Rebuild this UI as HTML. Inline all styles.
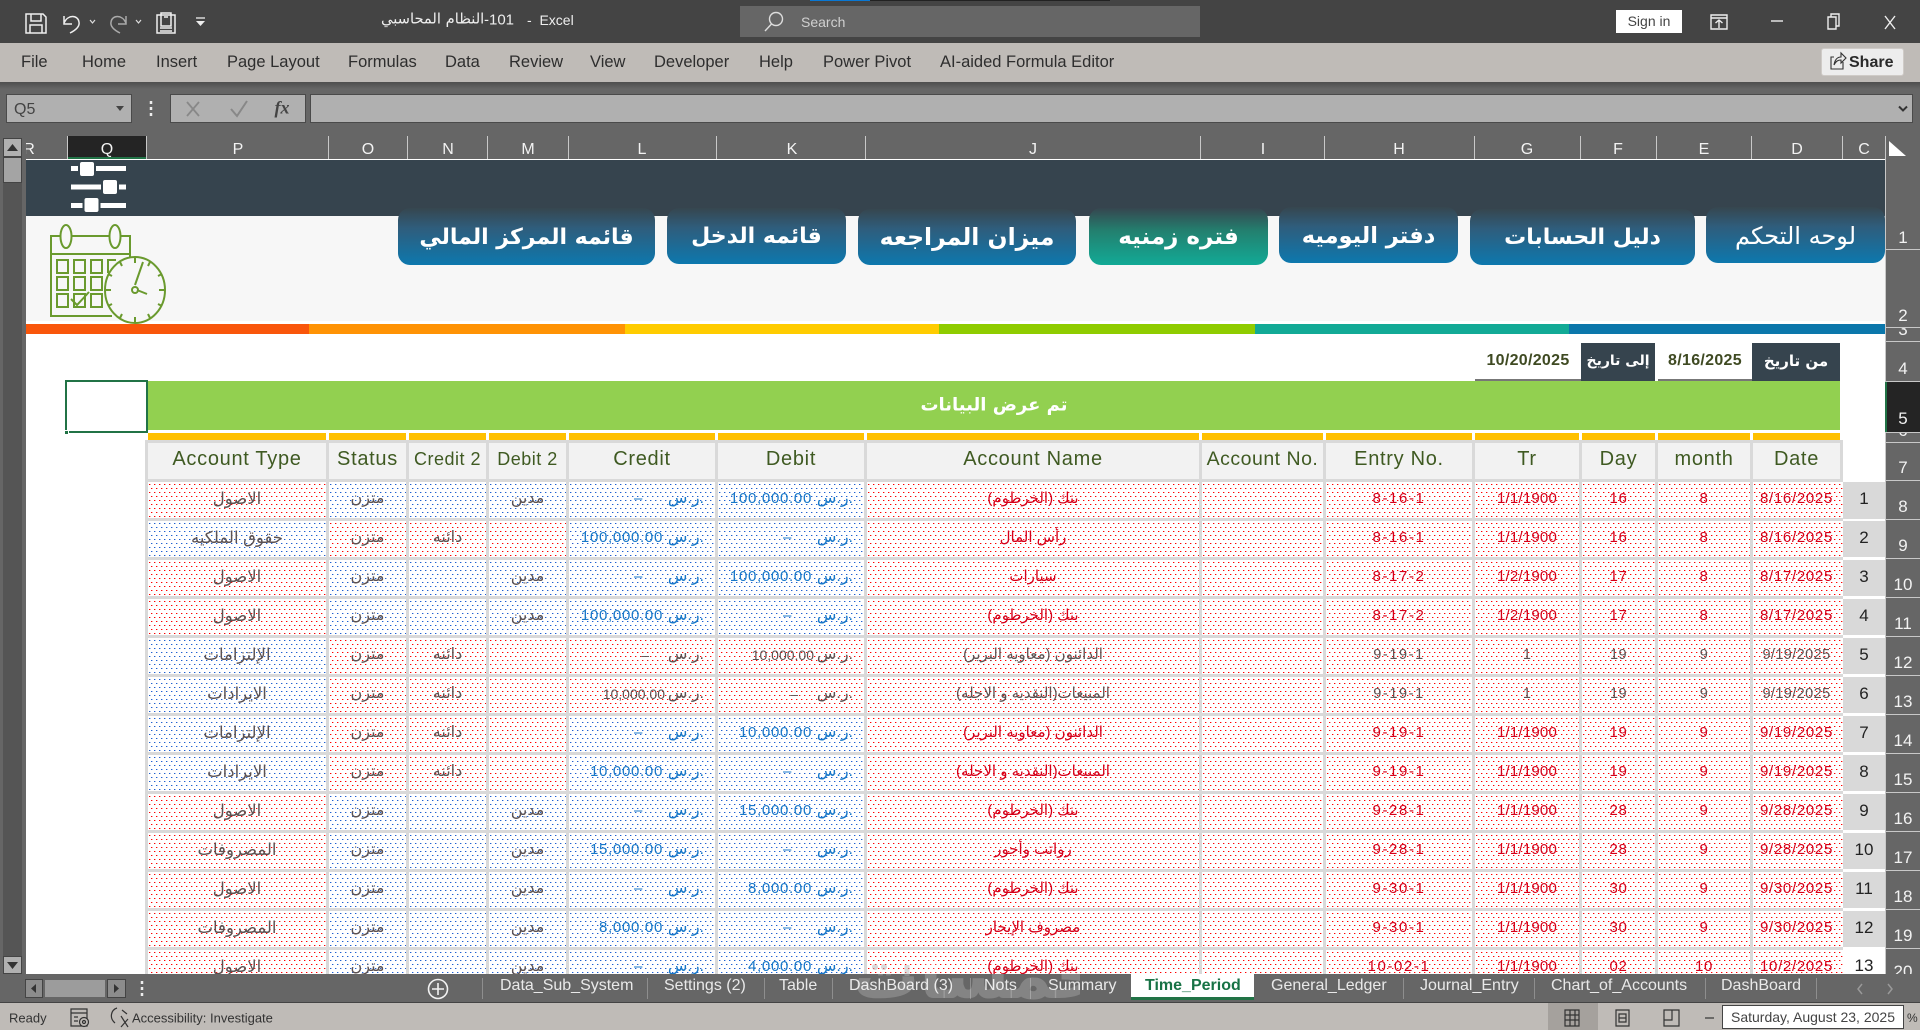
<!DOCTYPE html>
<html lang="en"><head><meta charset="utf-8"><title>Excel</title>
<style>
*{box-sizing:border-box}
html,body{margin:0;padding:0;width:1920px;height:1030px;overflow:hidden;background:#666;font-family:"Liberation Sans","DejaVu Sans",sans-serif}
.a{position:absolute;white-space:nowrap}
.t{position:absolute;white-space:nowrap;line-height:1;transform:translateY(-50%)}
.c{position:absolute;white-space:nowrap;line-height:1;transform:translate(-50%,-50%)}
.rib{font-size:16.5px;color:#2e2e2e;top:62px}
.col{font-size:16px;color:#f2f2f2;top:150px}
.sep{position:absolute;top:136px;height:23px;width:1px;background:#c8c8c8}
.rh{position:absolute;left:1886px;width:34px;text-align:center;color:#f2f2f2;font-size:17px;line-height:1}
.rl{position:absolute;left:1885px;width:35px;height:1px;background:#c8c8c8}
.btn{position:absolute;display:flex;align-items:center;justify-content:center;border-radius:12px;color:#fff;background:linear-gradient(#36464f,#2f5d7c 35%,#0d78ae);font-family:"DejaVu Sans",sans-serif;white-space:nowrap;font-weight:bold;direction:rtl}
.gold{position:absolute;top:433px;height:7px;background:#ffc000}
.g{position:absolute;left:145px;top:440px;width:1698px;height:534px;overflow:hidden;background:#d9d9d9;padding:3px 3px 0;display:grid;grid-template-columns:178px 77px 77px 77px 146px 146px 332px 121px 146px 104px 73px 92px 87px;grid-auto-rows:36px;gap:3px}
.g>div{position:relative;text-align:center;line-height:34px;font-size:15px;color:#5c5252;white-space:nowrap;overflow:hidden}
.g>div:nth-child(n+14):nth-child(13n){margin-right:-3px;padding-right:3px}
.g>div:not(.h):nth-child(13n+1){font-size:16.5px}
.g>div:not(.h):nth-child(13n+2),.g>div:not(.h):nth-child(13n+3),.g>div:not(.h):nth-child(13n+4){font-size:16px}
.g>.h{background:#f2f2f2;color:#3f5a22;font-size:20px;line-height:32px;letter-spacing:.7px}
.g>.h.s{font-size:18px;letter-spacing:.5px}
.g>.h.m{font-size:19.5px;letter-spacing:.5px}
.g>.r,.g>.b{background-color:#fff}
.r{background-image:conic-gradient(from 270deg at 1px 1px,#f00 25%,#0000 0),conic-gradient(from 270deg at 1px 1px,#f00 25%,#0000 0),conic-gradient(from 270deg at 2px 1px,#ffa6a6 25%,#0000 0),conic-gradient(from 270deg at 2px 1px,#ffa6a6 25%,#0000 0);background-size:5px 8px;background-position:1px 2px,3px 6px,1px 2px,3px 6px}
.b{background-image:conic-gradient(from 270deg at 1px 1px,#1f5fd0 25%,#0000 0),conic-gradient(from 270deg at 1px 1px,#1f5fd0 25%,#0000 0),conic-gradient(from 270deg at 2px 1px,#abc4ee 25%,#0000 0),conic-gradient(from 270deg at 2px 1px,#abc4ee 25%,#0000 0);background-size:5px 8px;background-position:1px 2px,3px 6px,1px 2px,3px 6px}
.g>.rd{color:#d4001a}
.g>.bl{color:#1878c8}
.g>.n{font-size:15px;letter-spacing:.7px}
.g>.n:nth-child(13n+9){letter-spacing:1.6px}
.g>.n:nth-child(13n+10){letter-spacing:.2px}
.g>.k{font-size:14.5px;letter-spacing:.4px}
.g i{position:absolute;right:52px;top:0;font-style:normal;letter-spacing:.7px;font-size:15px}
.g i.d{right:72px}
.g i.q{font-size:14px;letter-spacing:0;right:50px}
.g i.q.d{right:66px}
.g u{position:absolute;right:11px;top:0;text-decoration:none;font-size:16px}
.ix{position:absolute;left:1843px;width:42px;background:#d9d9d9;text-align:center;font-size:17px;color:#222;line-height:34px}
.tab{position:absolute;top:986px;font-size:16px;color:#e9e9e9;line-height:1;transform:translateY(-50%);white-space:nowrap}
.ts{position:absolute;top:978px;height:21px;width:1px;background:#8e8e8e}
</style></head><body>

<!-- title bar -->
<div class="a" style="left:0;top:0;width:1920px;height:43px;background:#444"></div>
<div class="a" style="left:810px;top:0;width:60px;height:1px;background:#0a78d4"></div>
<div class="a" style="left:870px;top:0;width:240px;height:1px;background:#222"></div>
<div class="a" style="left:740px;top:6px;width:460px;height:31px;background:#666"></div>
<div class="t" style="left:801px;top:22px;font-size:14px;color:#d0d0d0">Search</div>
<div class="t" style="left:381px;top:20px;font-size:14.700px;color:#eee;font-family:'DejaVu Sans',sans-serif;direction:rtl">النظام المحاسبي</div>
<div class="t" style="left:484px;top:20px;font-size:15px;color:#eee">-101</div>
<div class="t" style="left:527px;top:20px;font-size:14px;color:#eee">-&nbsp; Excel</div>
<div class="a" style="left:1616px;top:10px;width:66px;height:23px;background:#fff;color:#444;font-size:14px;line-height:23px;text-align:center">Sign in</div>

<!-- ribbon -->
<div class="a" style="left:0;top:43px;width:1920px;height:39px;background:#bfbbb7"></div>
<div class="t rib" style="left:21px">File</div>
<div class="t rib" style="left:82px">Home</div>
<div class="t rib" style="left:156px">Insert</div>
<div class="t rib" style="left:227px">Page Layout</div>
<div class="t rib" style="left:348px">Formulas</div>
<div class="t rib" style="left:445px">Data</div>
<div class="t rib" style="left:509px">Review</div>
<div class="t rib" style="left:590px">View</div>
<div class="t rib" style="left:654px">Developer</div>
<div class="t rib" style="left:759px">Help</div>
<div class="t rib" style="left:823px">Power Pivot</div>
<div class="t rib" style="left:940px">AI-aided Formula Editor</div>
<div class="a" style="left:1821px;top:48px;width:83px;height:28px;background:#ededed;border:1px solid #cfcbc7;border-radius:3px;color:#2a2a2a;font-size:16px;font-weight:bold;line-height:27px;padding-left:27px">Share</div>

<!-- formula bar -->
<div class="a" style="left:0;top:82px;width:1920px;height:54px;background:linear-gradient(#4e4e4e,#666 7px)"></div>
<div class="a" style="left:6px;top:94px;width:126px;height:29px;background:#b0b0b0;border:1px solid #4a4a4a;color:#444;font-size:16px;line-height:29px;padding-left:7px">Q5</div>
<div class="a" style="left:170px;top:94px;width:136px;height:29px;background:#b0b0b0;border:1px solid #4a4a4a"></div>
<div class="a" style="left:310px;top:94px;width:1603px;height:29px;background:#b0b0b0;border:1px solid #4a4a4a"></div>
<div class="c" style="left:282px;top:108px;font:italic bold 18px 'Liberation Serif',serif;color:#444">fx</div>

<!-- column headers -->
<div class="a" style="left:67px;top:136px;width:79px;height:23px;background:#242424"></div>
<div class="a" style="left:26px;top:159px;width:1859px;height:1px;background:#c8c8c8"></div>
<div class="a" style="left:67px;top:157px;width:79px;height:3px;background:#217346"></div>
<div class="sep" style="left:67px"></div><div class="sep" style="left:146px"></div><div class="sep" style="left:328px"></div><div class="sep" style="left:407px"></div><div class="sep" style="left:487px"></div><div class="sep" style="left:568px"></div><div class="sep" style="left:716px"></div><div class="sep" style="left:865px"></div><div class="sep" style="left:1200px"></div><div class="sep" style="left:1324px"></div><div class="sep" style="left:1474px"></div><div class="sep" style="left:1580px"></div><div class="sep" style="left:1656px"></div><div class="sep" style="left:1751px"></div><div class="sep" style="left:1842px"></div><div class="sep" style="left:1885px"></div>
<div class="c col" style="left:29px">R</div><div class="c col" style="left:107px">Q</div><div class="c col" style="left:238px">P</div><div class="c col" style="left:368px">O</div><div class="c col" style="left:448px">N</div><div class="c col" style="left:528px">M</div><div class="c col" style="left:642px">L</div><div class="c col" style="left:792px">K</div><div class="c col" style="left:1033px">J</div><div class="c col" style="left:1263px">I</div><div class="c col" style="left:1399px">H</div><div class="c col" style="left:1527px">G</div><div class="c col" style="left:1618px">F</div><div class="c col" style="left:1704px">E</div><div class="c col" style="left:1797px">D</div><div class="c col" style="left:1864px">C</div>

<!-- left scroll strip -->
<div class="a" style="left:0;top:136px;width:26px;height:838px;background:#666"></div>
<div class="a" style="left:3px;top:138px;width:19px;height:836px;background:#555"></div>
<div class="a" style="left:3px;top:138px;width:19px;height:19px;background:#b0b0b0;border:1px solid #444"></div>
<div class="a" style="left:3px;top:157px;width:19px;height:26px;background:#a4a4a4;border:1px solid #444"></div>
<div class="a" style="left:3px;top:956px;width:19px;height:18px;background:#b0b0b0;border:1px solid #444"></div>

<!-- sheet -->
<div class="a" style="left:26px;top:159px;width:1859px;height:815px;background:#fff"></div>
<div class="a" style="left:26px;top:160px;width:1859px;height:56px;background:#36444e"></div>
<div class="a" style="left:26px;top:216px;width:1859px;height:105px;background:#f7f7f7"></div>
<div class="a" style="left:26px;top:324px;width:283px;height:10px;background:#f9560b"></div>
<div class="a" style="left:309px;top:324px;width:316px;height:10px;background:#ff9305"></div>
<div class="a" style="left:625px;top:324px;width:314px;height:10px;background:#ffcc00"></div>
<div class="a" style="left:939px;top:324px;width:316px;height:10px;background:#8fcc00"></div>
<div class="a" style="left:1255px;top:324px;width:314px;height:10px;background:#12aa96"></div>
<div class="a" style="left:1569px;top:324px;width:316px;height:10px;background:#0b77ab"></div>

<!-- nav buttons -->
<div class="btn" style="left:398px;top:208px;width:257px;height:57px;font-size:22px;padding-top:2px">قائمه المركز المالي</div>
<div class="btn" style="left:667px;top:208px;width:179px;height:56px;font-size:22px;padding-top:1px">قائمه الدخل</div>
<div class="btn" style="left:858px;top:209px;width:218px;height:56px;font-size:23.500px">ميزان المراجعه</div>
<div class="btn" style="left:1089px;top:208px;width:179px;height:57px;font-size:23px;background:linear-gradient(#36464f,#23806f 40%,#12aa96)">فتره زمنيه</div>
<div class="btn" style="left:1279px;top:207px;width:179px;height:56px;font-size:22.500px;padding-top:1px">دفتر اليوميه</div>
<div class="btn" style="left:1470px;top:209px;width:225px;height:56px;font-size:22px">دليل الحسابات</div>
<div class="btn" style="left:1706px;top:207px;width:179px;height:56px;font-size:24px;font-weight:normal;padding-top:2px">لوحه التحكم</div>

<!-- date filter -->
<div class="a" style="left:1752px;top:343px;width:88px;height:38px;background:#36444e;color:#fff;text-align:center;font:bold 15px/36px 'DejaVu Sans',sans-serif;direction:rtl">من تاريخ</div>
<div class="a" style="left:1581px;top:343px;width:74px;height:38px;background:#36444e;color:#fff;text-align:center;font:bold 14px/36px 'DejaVu Sans',sans-serif;direction:rtl">إلى تاريخ</div>
<div class="a" style="left:1658px;top:343px;width:94px;height:39px;border-bottom:3px solid #777;color:#3f4a22;text-align:center;font-size:16px;font-weight:bold;line-height:35px;letter-spacing:.3px">8/16/2025</div>
<div class="a" style="left:1475px;top:343px;width:106px;height:39px;border-bottom:3px solid #777;color:#3f4a22;text-align:center;font-size:16px;font-weight:bold;line-height:35px;letter-spacing:.3px">10/20/2025</div>

<!-- green status bar -->
<div class="a" style="left:148px;top:381px;width:1692px;height:49px;background:#92d050"></div>
<div class="c" style="left:994px;top:405px;font:bold 18px 'DejaVu Sans',sans-serif;color:#fff;direction:rtl">تم عرض البيانات</div>

<!-- gold strips -->
<div class="gold" style="left:148px;width:178px"></div><div class="gold" style="left:329px;width:77px"></div><div class="gold" style="left:409px;width:77px"></div><div class="gold" style="left:489px;width:77px"></div><div class="gold" style="left:569px;width:146px"></div><div class="gold" style="left:718px;width:146px"></div><div class="gold" style="left:867px;width:332px"></div><div class="gold" style="left:1202px;width:121px"></div><div class="gold" style="left:1326px;width:146px"></div><div class="gold" style="left:1475px;width:104px"></div><div class="gold" style="left:1582px;width:73px"></div><div class="gold" style="left:1658px;width:92px"></div><div class="gold" style="left:1753px;width:87px"></div>

<!-- table -->
<div class="g">
<div class="h">Account Type</div><div class="h">Status</div><div class="h s">Credit 2</div><div class="h s">Debit 2</div><div class="h">Credit</div><div class="h">Debit</div><div class="h">Account Name</div><div class="h m">Account No.</div><div class="h">Entry No.</div><div class="h">Tr</div><div class="h">Day</div><div class="h">month</div><div class="h">Date</div>

<div class="r">الاصول</div><div class="b">متزن</div><div class="b"></div><div class="b">مدين</div><div class="b bl"><i class="d">–</i><u>ر.س.</u></div><div class="b bl"><i>100,000.00</i><u>ر.س.</u></div><div class="r rd">بنك (الخرطوم)</div><div class="r"></div><div class="r rd n">8-16-1</div><div class="r rd n">1/1/1900</div><div class="r rd n">16</div><div class="r rd n">8</div><div class="r rd n">8/16/2025</div>

<div class="b">حقوق الملكيه</div><div class="r">متزن</div><div class="r">دائنه</div><div class="r"></div><div class="b bl"><i>100,000.00</i><u>ر.س.</u></div><div class="b bl"><i class="d">–</i><u>ر.س.</u></div><div class="r rd">رأس المال</div><div class="r"></div><div class="r rd n">8-16-1</div><div class="r rd n">1/1/1900</div><div class="r rd n">16</div><div class="r rd n">8</div><div class="r rd n">8/16/2025</div>

<div class="r">الاصول</div><div class="b">متزن</div><div class="b"></div><div class="b">مدين</div><div class="b bl"><i class="d">–</i><u>ر.س.</u></div><div class="b bl"><i>100,000.00</i><u>ر.س.</u></div><div class="r rd">سيارات</div><div class="r"></div><div class="r rd n">8-17-2</div><div class="r rd n">1/2/1900</div><div class="r rd n">17</div><div class="r rd n">8</div><div class="r rd n">8/17/2025</div>

<div class="r">الاصول</div><div class="b">متزن</div><div class="b"></div><div class="b">مدين</div><div class="b bl"><i>100,000.00</i><u>ر.س.</u></div><div class="b bl"><i class="d">–</i><u>ر.س.</u></div><div class="r rd">بنك (الخرطوم)</div><div class="r"></div><div class="r rd n">8-17-2</div><div class="r rd n">1/2/1900</div><div class="r rd n">17</div><div class="r rd n">8</div><div class="r rd n">8/17/2025</div>

<div class="b">الإلتزامات</div><div class="r">متزن</div><div class="r">دائنه</div><div class="r"></div><div class="r"><i class="q d">–</i><u>ر.س.</u></div><div class="r"><i class="q">10,000.00</i><u>ر.س.</u></div><div class="r">الدائنون (معاويه البرير)</div><div class="r"></div><div class="r n k">9-19-1</div><div class="r n k">1</div><div class="r n k">19</div><div class="r n k">9</div><div class="r n k">9/19/2025</div>

<div class="b">الايرادات</div><div class="r">متزن</div><div class="r">دائنه</div><div class="r"></div><div class="r"><i class="q">10,000.00</i><u>ر.س.</u></div><div class="r"><i class="q d">–</i><u>ر.س.</u></div><div class="r">المبيعات(النقديه و الاجله)</div><div class="r"></div><div class="r n k">9-19-1</div><div class="r n k">1</div><div class="r n k">19</div><div class="r n k">9</div><div class="r n k">9/19/2025</div>

<div class="b">الإلتزامات</div><div class="r">متزن</div><div class="r">دائنه</div><div class="r"></div><div class="b bl"><i class="d">–</i><u>ر.س.</u></div><div class="b bl"><i>10,000.00</i><u>ر.س.</u></div><div class="r rd">الدائنون (معاويه البرير)</div><div class="r"></div><div class="r rd n">9-19-1</div><div class="r rd n">1/1/1900</div><div class="r rd n">19</div><div class="r rd n">9</div><div class="r rd n">9/19/2025</div>

<div class="b">الايرادات</div><div class="r">متزن</div><div class="r">دائنه</div><div class="r"></div><div class="b bl"><i>10,000.00</i><u>ر.س.</u></div><div class="b bl"><i class="d">–</i><u>ر.س.</u></div><div class="r rd">المبيعات(النقديه و الاجله)</div><div class="r"></div><div class="r rd n">9-19-1</div><div class="r rd n">1/1/1900</div><div class="r rd n">19</div><div class="r rd n">9</div><div class="r rd n">9/19/2025</div>

<div class="r">الاصول</div><div class="b">متزن</div><div class="b"></div><div class="b">مدين</div><div class="b bl"><i class="d">–</i><u>ر.س.</u></div><div class="b bl"><i>15,000.00</i><u>ر.س.</u></div><div class="r rd">بنك (الخرطوم)</div><div class="r"></div><div class="r rd n">9-28-1</div><div class="r rd n">1/1/1900</div><div class="r rd n">28</div><div class="r rd n">9</div><div class="r rd n">9/28/2025</div>

<div class="r">المصروفات</div><div class="b">متزن</div><div class="b"></div><div class="b">مدين</div><div class="b bl"><i>15,000.00</i><u>ر.س.</u></div><div class="b bl"><i class="d">–</i><u>ر.س.</u></div><div class="r rd">رواتب وأجور</div><div class="r"></div><div class="r rd n">9-28-1</div><div class="r rd n">1/1/1900</div><div class="r rd n">28</div><div class="r rd n">9</div><div class="r rd n">9/28/2025</div>

<div class="r">الاصول</div><div class="b">متزن</div><div class="b"></div><div class="b">مدين</div><div class="b bl"><i class="d">–</i><u>ر.س.</u></div><div class="b bl"><i>8,000.00</i><u>ر.س.</u></div><div class="r rd">بنك (الخرطوم)</div><div class="r"></div><div class="r rd n">9-30-1</div><div class="r rd n">1/1/1900</div><div class="r rd n">30</div><div class="r rd n">9</div><div class="r rd n">9/30/2025</div>

<div class="r">المصروفات</div><div class="b">متزن</div><div class="b"></div><div class="b">مدين</div><div class="b bl"><i>8,000.00</i><u>ر.س.</u></div><div class="b bl"><i class="d">–</i><u>ر.س.</u></div><div class="r rd">مصروف الإيجار</div><div class="r"></div><div class="r rd n">9-30-1</div><div class="r rd n">1/1/1900</div><div class="r rd n">30</div><div class="r rd n">9</div><div class="r rd n">9/30/2025</div>

<div class="r">الاصول</div><div class="b">متزن</div><div class="b"></div><div class="b">مدين</div><div class="b bl"><i class="d">–</i><u>ر.س.</u></div><div class="b bl"><i>4,000.00</i><u>ر.س.</u></div><div class="r rd">بنك (الخرطوم)</div><div class="r"></div><div class="r rd n">10-02-1</div><div class="r rd n">1/1/1900</div><div class="r rd n">02</div><div class="r rd n">10</div><div class="r rd n">10/2/2025</div>
</div>

<!-- index column -->
<div class="ix" style="top:482px;height:37px">1</div><div class="ix" style="top:521px;height:36px">2</div><div class="ix" style="top:560px;height:36px">3</div><div class="ix" style="top:599px;height:36px">4</div><div class="ix" style="top:638px;height:36px">5</div><div class="ix" style="top:677px;height:36px">6</div><div class="ix" style="top:716px;height:36px">7</div><div class="ix" style="top:755px;height:36px">8</div><div class="ix" style="top:794px;height:36px">9</div><div class="ix" style="top:833px;height:36px">10</div><div class="ix" style="top:872px;height:36px">11</div><div class="ix" style="top:911px;height:36px">12</div><div class="ix" style="top:950px;height:24px;background:#fff;line-height:32px;overflow:hidden">13</div>

<!-- selection Q5 -->
<div class="a" style="left:65px;top:380px;width:83px;height:53px;border:2px solid #217346"></div>
<div class="a" style="left:64px;top:430px;width:5px;height:5px;background:#217346;border:1px solid #fff"></div>

<!-- row headers -->
<div class="a" style="left:1885px;top:136px;width:35px;height:838px;background:#666"></div>
<div class="a" style="left:1885px;top:136px;width:1px;height:838px;background:#c8c8c8"></div>
<div class="a" style="left:1885px;top:381px;width:35px;height:51px;background:#242424;border-left:2px solid #217346"></div>
<div class="rl" style="top:249px"></div><div class="rl" style="top:327px"></div><div class="rl" style="top:341px"></div><div class="rl" style="top:381px"></div><div class="rl" style="top:432px"></div><div class="rl" style="top:442px"></div><div class="rl" style="top:480px"></div><div class="rl" style="top:519px"></div><div class="rl" style="top:558px"></div><div class="rl" style="top:597px"></div><div class="rl" style="top:636px"></div><div class="rl" style="top:675px"></div><div class="rl" style="top:714px"></div><div class="rl" style="top:753px"></div><div class="rl" style="top:792px"></div><div class="rl" style="top:831px"></div><div class="rl" style="top:870px"></div><div class="rl" style="top:909px"></div><div class="rl" style="top:948px"></div>
<div class="rh" style="top:229px">1</div><div class="rh" style="top:307px">2</div><div class="rh" style="top:328px;height:8px;overflow:hidden"><span style="position:relative;top:-7px">3</span></div><div class="rh" style="top:360px">4</div><div class="rh" style="top:410px">5</div><div class="rh" style="top:433px;height:4px;overflow:hidden"><span style="position:relative;top:-11px">6</span></div><div class="rh" style="top:459px">7</div><div class="rh" style="top:498px">8</div><div class="rh" style="top:537px">9</div><div class="rh" style="top:576px">10</div><div class="rh" style="top:615px">11</div><div class="rh" style="top:654px">12</div><div class="rh" style="top:693px">13</div><div class="rh" style="top:732px">14</div><div class="rh" style="top:771px">15</div><div class="rh" style="top:810px">16</div><div class="rh" style="top:849px">17</div><div class="rh" style="top:888px">18</div><div class="rh" style="top:927px">19</div><div class="rh" style="top:963px;height:11px;overflow:hidden">20</div>

<!-- tab bar -->
<div class="a" style="left:0;top:974px;width:1920px;height:29px;background:#666;border-bottom:1px solid #444"></div>
<div class="a" style="left:25px;top:979px;width:18px;height:19px;background:#8c8c8c;border:1px solid #444"></div>
<div class="a" style="left:44px;top:979px;width:62px;height:19px;background:#9c9c9c;border:1px solid #666"></div>
<div class="a" style="left:107px;top:979px;width:19px;height:19px;background:#8c8c8c;border:1px solid #444"></div>
<div class="ts" style="left:482px"></div><div class="ts" style="left:647px"></div><div class="ts" style="left:764px"></div><div class="ts" style="left:832px"></div><div class="ts" style="left:970px"></div><div class="ts" style="left:1030px"></div><div class="ts" style="left:1403px"></div><div class="ts" style="left:1534px"></div><div class="ts" style="left:1705px"></div><div class="ts" style="left:1816px"></div>
<div class="a" style="left:845px;top:960px;width:235px;height:46px;overflow:hidden;z-index:5"><div style="position:absolute;left:8px;top:-34px;font:bold 66px/100px 'DejaVu Sans',sans-serif;color:rgba(255,255,255,.2);direction:rtl">خمسات</div></div>
<div class="tab" style="left:500px">Data_Sub_System</div>
<div class="tab" style="left:664px">Settings (2)</div>
<div class="tab" style="left:779px">Table</div>
<div class="tab" style="left:849px">DashBoard (3)</div>
<div class="tab" style="left:984px">Nots</div>
<div class="tab" style="left:1048px">Summary</div>
<div class="a" style="left:1131px;top:974px;width:123px;height:26px;background:#fff;border-bottom:3px solid #217346"></div>
<div class="tab" style="left:1145px;color:#177245;font-weight:bold">Time_Period</div>
<div class="tab" style="left:1271px">General_Ledger</div>
<div class="tab" style="left:1420px">Journal_Entry</div>
<div class="tab" style="left:1551px">Chart_of_Accounts</div>
<div class="tab" style="left:1721px">DashBoard</div>

<!-- status bar -->
<div class="a" style="left:0;top:1003px;width:1920px;height:27px;background:#bfbbb7"></div>
<div class="t" style="left:9px;top:1018px;font-size:13px;color:#333">Ready</div>
<div class="t" style="left:132px;top:1018px;font-size:13px;color:#333">Accessibility: Investigate</div>
<div class="a" style="left:1548px;top:1003px;width:50px;height:27px;background:#a5a19d"></div>
<div class="a" style="left:1722px;top:1005px;width:182px;height:24px;background:#fff;border:1px solid #444;color:#444;font-size:14px;line-height:22px;text-align:center">Saturday, August 23, 2025</div>
<div class="t" style="left:1907px;top:1018px;font-size:12px;color:#333">%</div>

<!-- icon overlay -->
<svg width="1920" height="1030" viewBox="0 0 1920 1030" style="position:absolute;left:0;top:0;z-index:6;pointer-events:none" fill="none">
 <!-- quick access -->
 <g stroke="#eee" stroke-width="1.5">
  <path d="M26 14H43L46 17V33H26Z"/><path d="M31 14V21H41V14M30 33V25H42V33"/>
  <path d="M64 16V24H72M64 23C68 14 78 15 79 22C80 27 74 31 70 33"/>
  <path d="M126 16V24H118M126 23C122 14 112 15 111 22C110 27 116 31 120 33" stroke="#aaa"/>
  <path d="M157 15H175V33H157Z"/><path d="M161 13H171V26H161ZM164 17H168M160 28H172M160 31H172"/>
 </g>
 <path d="M90 20L92.500 23L95 20M136 20L138.500 23L141 20" stroke="#ddd" stroke-width="1.2"/>
 <path d="M196 18H205" stroke="#eee" stroke-width="1.3"/><path d="M196 21H205L200.500 26Z" fill="#eee"/>
 <!-- search -->
 <circle cx="776" cy="19" r="6.500" stroke="#ddd" stroke-width="1.4"/><path d="M771.500 24L765 31" stroke="#ddd" stroke-width="1.4"/>
 <!-- window controls -->
 <g stroke="#eee" stroke-width="1.4">
  <path d="M1711 15H1727V29H1711ZM1711 18H1727M1719 28V20M1715.500 23L1719 20L1722.500 23"/>
  <path d="M1771 21H1783"/>
  <path d="M1828 17H1836V29H1828ZM1831 17V14H1839V26H1836"/>
  <path d="M1885 16L1895 29M1895 16L1885 29"/>
 </g>
 <!-- share -->
 <path d="M1834 57H1831V69H1843V62M1834 65C1835 59 1838 57 1841 57V53L1846 58L1841 63V60C1838 60 1836 61 1834 65Z" stroke="#333" stroke-width="1.1"/>
 <!-- formula bar -->
 <path d="M116 106H124L120 111Z" fill="#444"/>
 <path d="M1899 106.500L1903 110.500L1907 106.500" stroke="#333" stroke-width="2"/>
 <path d="M151 101V104M151 107V110M151 113V116" stroke="#eee" stroke-width="2.500"/>
 <path d="M187 102L199 116M199 102L187 116" stroke="#888" stroke-width="1.800"/>
 <path d="M231 109L237 116L247 101" stroke="#888" stroke-width="2"/>
 <!-- corner triangle -->
 <path d="M1889 141V156H1906Z" fill="#fff"/>
 <!-- scroll arrows -->
 <path d="M7 151H18L12.500 144Z" fill="#333"/><path d="M7 962H18L12.500 969Z" fill="#333"/>
 <!-- sliders -->
 <g fill="#fff">
  <rect x="71" y="166" width="55" height="5"/><rect x="71" y="184.500" width="55" height="5"/><rect x="71" y="203" width="55" height="5"/>
 </g>
 <g fill="#fff" stroke="#36444e" stroke-width="2">
  <rect x="79" y="161" width="16" height="16" rx="3"/><rect x="102" y="179" width="16" height="16" rx="3"/><rect x="83.500" y="197" width="16" height="16" rx="3"/>
 </g>
 <!-- calendar/clock -->
 <g stroke="#6a9a2e" stroke-width="2">
  <path d="M60 236H51V316H112M72 236H109M121 236H130V257M51 254H130"/>
  <ellipse cx="66" cy="236.500" rx="5.500" ry="11.500"/><ellipse cx="115" cy="236.500" rx="5.500" ry="11.500"/>
  <path d="M57 260H68V273H57ZM74 260H85V273H74ZM91 260H102V273H91ZM108 273V260H116M57 277H68V290H57ZM74 277H85V290H74ZM91 277H102V290H91ZM57 294H68V307H57ZM74 294H85V307H74ZM91 294H102V307H91Z"/>
  <path d="M71 299L77 305L89 292"/>
  <ellipse cx="135" cy="290" rx="30" ry="33"/>
  <path d="M135 285L143 262M137 290L147 294"/><circle cx="135" cy="290" r="3"/>
  <path d="M135 257V263M135 317V323M105 290H111M159 290H165M120 262L122 266M150 262L148 266M108 274L112 276M162 274L158 276M108 306L112 304M162 306L158 304M120 318L122 314M150 318L148 314"/>
 </g>
 <!-- watermark dots -->
 <circle cx="875" cy="967" r="3" fill="rgba(180,180,180,.5)"/><circle cx="884" cy="967" r="3" fill="rgba(180,180,180,.5)"/><path d="M907 965V976" stroke="rgba(180,180,180,.45)" stroke-width="5"/>
 <!-- tab bar icons -->
 <path d="M36 984L31 988.500L36 993Z" fill="#333"/><path d="M114 984L119 988.500L114 993Z" fill="#333"/>
 <path d="M142 981V984M142 987V990M142 993V996" stroke="#eee" stroke-width="2.500"/>
 <circle cx="438" cy="989" r="9.500" stroke="#f2f2f2" stroke-width="1.600"/><path d="M438 983V995M432 989H444" stroke="#f2f2f2" stroke-width="1.600"/>
 <path d="M1862 984L1858 989L1862 994M1888 984L1892 989L1888 994" stroke="#999" stroke-width="1.500"/>
 <!-- status icons -->
 <g stroke="#333" stroke-width="1.200">
  <path d="M71 1009H87V1026H71ZM71 1013H87M74 1017H78M74 1021H78"/><circle cx="84" cy="1022" r="4.500" fill="#bfbbb7"/><circle cx="84" cy="1022" r="1.500"/>
  <path d="M117 1008C111 1010 109 1018 115 1023M122 1010L127 1014M121 1016L128 1027M128 1019L121 1027"/>
  <path d="M1565 1010H1579V1026H1565ZM1565 1015H1579M1565 1020H1579M1570 1010V1026M1575 1010V1026"/>
  <path d="M1616 1010H1629V1026H1616ZM1619 1014H1626V1022H1619ZM1619 1018H1626"/>
  <path d="M1664 1010H1679V1026H1664ZM1664 1020H1672V1010"/>
  <path d="M1705 1018H1714"/>
 </g>
</svg>
</body></html>
